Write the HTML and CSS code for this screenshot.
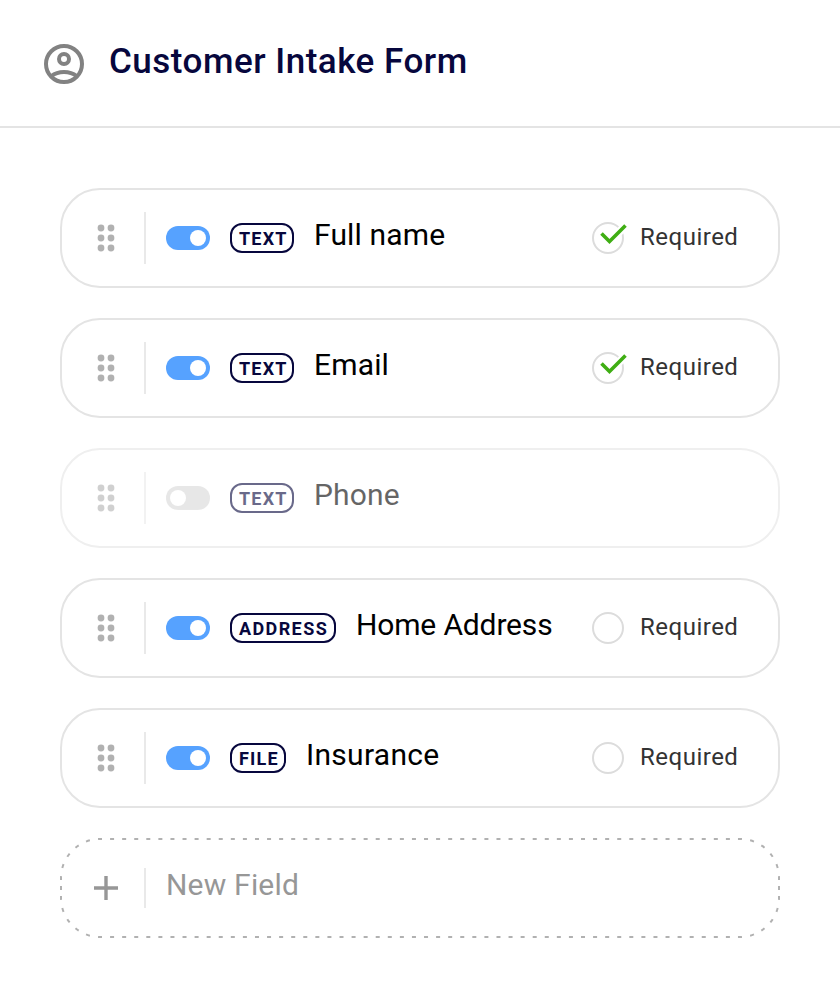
FILE: index.html
```html
<!DOCTYPE html>
<html lang="en">
<head>
<meta charset="utf-8">
<title>Customer Intake Form</title>
<link rel="stylesheet" href="styles.css">
</head>
<body>
<svg class="defs" width="0" height="0" aria-hidden="true">
  <symbol id="grip" viewBox="0 0 18 28"><g fill="#b1b1b1"><circle cx="4" cy="4" r="3.4"/><circle cx="14" cy="4" r="3.4"/><circle cx="4" cy="14" r="3.4"/><circle cx="14" cy="14" r="3.4"/><circle cx="4" cy="24" r="3.4"/><circle cx="14" cy="24" r="3.4"/></g></symbol>
  <symbol id="empty" viewBox="0 0 36 32"><circle cx="16" cy="16" r="15" fill="none" stroke="#dcdcdc" stroke-width="2"/></symbol>
  <symbol id="checked" viewBox="0 0 36 32"><circle cx="16" cy="16" r="15" fill="none" stroke="#dcdcdc" stroke-width="2"/><path d="M9.5 11.5 17.5 19.5 33.5 3.5" fill="none" stroke="#fff" stroke-width="8"/><path d="M9.5 11.5 17.5 19.5 33.5 3.5" fill="none" stroke="#3fae14" stroke-width="3.6"/></symbol>
</svg>
<header class="header">
  <svg class="avatar" viewBox="0 0 40 40" fill="none" stroke="#828282" stroke-width="4"><circle cx="20" cy="20" r="18"/><circle cx="20" cy="15" r="5"/><path d="M7.500 32C14 26.500 26 26.500 32.500 32"/></svg>
  <h1 class="title">Customer Intake Form</h1>
</header>
<main class="fields">
  <div class="field"><svg class="grip"><use href="#grip"/></svg><i class="rule"></i><i class="toggle"></i><span class="badge text"><b>TEXT</b></span><span class="name full">Full name</span><svg class="check"><use href="#checked"/></svg><span class="required">Required</span></div>
  <div class="field"><svg class="grip"><use href="#grip"/></svg><i class="rule"></i><i class="toggle"></i><span class="badge text"><b>TEXT</b></span><span class="name email">Email</span><svg class="check"><use href="#checked"/></svg><span class="required">Required</span></div>
  <div class="field disabled"><svg class="grip"><use href="#grip"/></svg><i class="rule"></i><i class="toggle off"></i><span class="badge text"><b>TEXT</b></span><span class="name phone">Phone</span></div>
  <div class="field"><svg class="grip"><use href="#grip"/></svg><i class="rule"></i><i class="toggle"></i><span class="badge address"><b>ADDRESS</b></span><span class="name home">Home Address</span><svg class="check"><use href="#empty"/></svg><span class="required">Required</span></div>
  <div class="field"><svg class="grip"><use href="#grip"/></svg><i class="rule"></i><i class="toggle"></i><span class="badge file"><b>FILE</b></span><span class="name insurance">Insurance</span><svg class="check"><use href="#empty"/></svg><span class="required">Required</span></div>
  <div class="field new">
    <svg class="outline" viewBox="0 0 720 100" fill="none" stroke="#b1b1b1" stroke-width="2">
      <path d="M40 1H680M40 99H680" stroke-dasharray="4 8.075" stroke-dashoffset="2"/>
      <path d="M40 1A39 39 0 0 0 1 40M680 1A39 39 0 0 1 719 40M40 99A39 39 0 0 1 1 60M680 99A39 39 0 0 0 719 60" stroke-dasharray="4 8.252" stroke-dashoffset="2"/>
      <path d="M1 40V60M719 40V60" stroke-dasharray="4 6" stroke-dashoffset="2"/>
    </svg>
    <svg class="plus" viewBox="0 0 24 24"><path d="M12 0V24M0 12H24" stroke="#979797" stroke-width="3.400"/></svg><i class="rule short"></i><span class="name add">New Field</span>
  </div>
</main>
</body>
</html>
```
FILE: styles.css
```css
* { box-sizing: border-box; }
body { margin: 0; background: #fff; color: #000; font-family: Roboto, "Liberation Sans", sans-serif; }
.defs { display: none; }
.header { display: flex; height: 128px; padding: 44px 44px 0; border-bottom: 2px solid #e4e4e4; }
.avatar { width: 40px; height: 40px; margin-right: 25px; }
.title { margin: -3px 0 0; color: #07073d; font-size: 35px; font-weight: 500; line-height: 42px; letter-spacing: 0.5px; white-space: nowrap; }
.fields { display: flex; flex-direction: column; gap: 30px; padding: 60px 60px 0; }
.field { position: relative; display: flex; align-items: center; height: 100px; padding: 0 38px 0 34px; border: 2px solid #e4e4e4; border-radius: 40px; white-space: nowrap; }
.grip { width: 18px; height: 28px; margin-right: 29px; margin-left: 1px; }
.rule { width: 2px; height: 52px; margin-right: 20px; background: #e9e9e9; }
.toggle { display: flex; justify-content: flex-end; width: 44px; height: 24px; margin-right: 20px; padding: 4px; border-radius: 12px; background: #56a2ff; }
.toggle::before { content: ""; width: 16px; height: 16px; border-radius: 50%; background: #fff; }
.toggle.off { justify-content: flex-start; background: #d8d8d8; }
.badge { display: flex; align-items: center; width: 64px; height: 30px; margin-right: 20px; padding: 2px 0 0 7px; border: 2px solid #07073d; border-radius: 12px; color: #07073d; font-size: 18px; line-height: 20px; letter-spacing: 1.2px; }
.badge.address { width: 106px; letter-spacing: 1.4px; }
.badge.file { width: 56px; }
.badge b { font-weight: 700; }
.name { margin-top: -6px; font-size: 30px; line-height: 36px; letter-spacing: 0.15px; }
.name.home { letter-spacing: -0.15px; }
.name.insurance { letter-spacing: 0.3px; }
.check { width: 36px; height: 32px; margin-left: auto; }
.required { width: 100px; margin: -2px 0 0 12px; color: #333; font-size: 24px; line-height: 28px; letter-spacing: 0.5px; }
.disabled { border-color: #efefef; }
.disabled > * { opacity: 0.6; }
.new { border-color: transparent; }
.outline { position: absolute; top: -2px; left: -2px; width: 720px; height: 100px; }
.plus { width: 24px; height: 24px; margin: 0 26px 0 -2px; }
.rule.short { height: 40px; }
.name.add { color: #979797; letter-spacing: 0.2px; }
```
